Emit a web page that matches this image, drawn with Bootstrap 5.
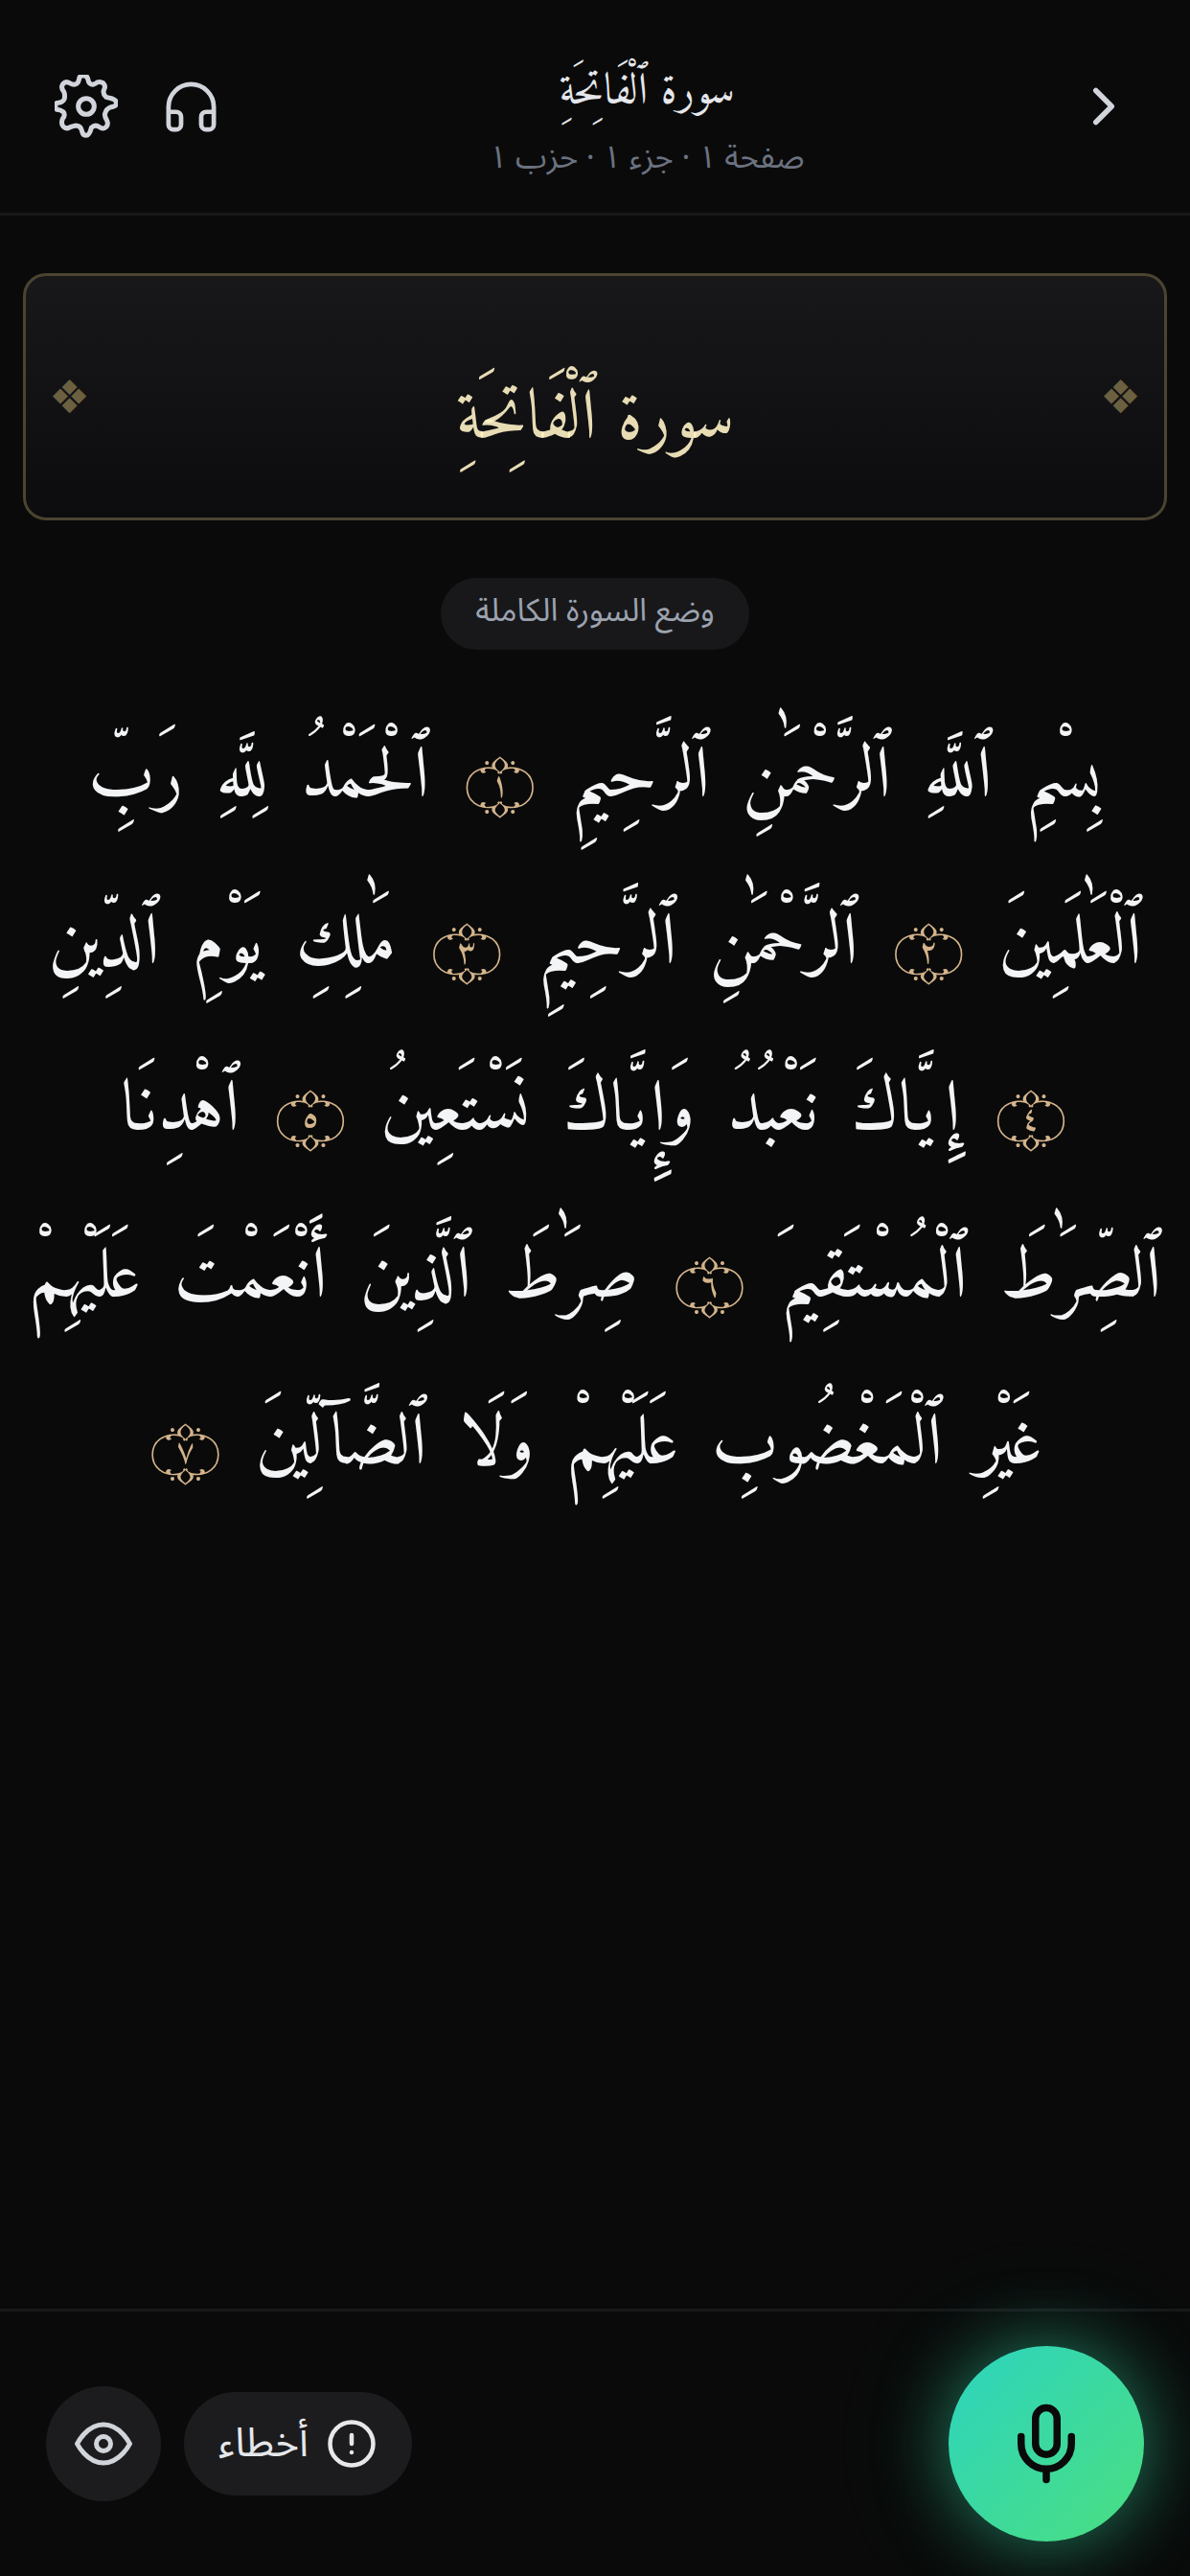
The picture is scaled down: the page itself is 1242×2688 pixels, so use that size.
<!DOCTYPE html>
<html lang="ar" dir="rtl">
<head>
<meta charset="utf-8">
<meta name="viewport" content="width=device-width, initial-scale=1">
<title>سورة الفاتحة</title>
<link href="https://cdn.jsdelivr.net/npm/bootstrap@5.3.0/dist/css/bootstrap.min.css" rel="stylesheet">
<style>
body{background:#0a0a0a;color:#f3f4f6;font-family:"Noto Sans Arabic","Noto Sans",sans-serif}
.quran-font{font-family:"Amiri Quran",Amiri,"Noto Naskh Arabic",serif}
.top-bar{border-bottom:3px solid #18181a;padding:54px 36px 30px}
.bar-btn{color:#d1d5db;padding:24px 21px;border:0;background:none;line-height:0}
.bar-tools{gap:3px}
.page-title{font-size:46px;line-height:54px;color:#e5e7eb;font-weight:400}
.page-meta{margin-top:30px;font-size:33px;line-height:54px;color:#6b7280}
.sura-banner{margin:60px 24px 0;padding:36px 24px;border:3px solid #4a4431;border-radius:24px;background:linear-gradient(180deg,#18181b,#0c0c0e)}
.sura-name{font-size:73px;line-height:180px;color:rgba(255,243,198,.9);font-weight:400}
.floret{font-family:"DejaVu Sans",sans-serif;font-size:48px;line-height:54px;color:#6b6040}
.mode-chip{margin-top:60px;background:#18181b;color:#9ca3af;font-size:33px;line-height:51px;padding:9px 36px 15px}
.ayat{margin-top:22px;font-size:75px;line-height:174px}
.ayat span{padding:0 6px}
.ayat .ayah-no{padding:0 8px;font-size:59px;color:#d4b48c;line-height:1}
.bottom-bar{border-top:3px solid #18181a;padding:36px 48px}
.tool-btn{background:#1c1c1e;color:#e5e7eb;border:0}
.tool-round{width:120px;height:120px;color:#d1d5db}
.tool-pill{height:108px;padding:0 36px;gap:18px;font-size:42px;line-height:60px}
.mic-btn{width:204px;height:204px;border:0;color:#0a0a0a;background:linear-gradient(135deg,#2dd4bf,#4ade80);box-shadow:0 0 72px rgba(52,211,153,.5),0 0 132px rgba(45,212,191,.15)}
svg{fill:none;stroke:currentColor;stroke-width:2;stroke-linecap:round;stroke-linejoin:round;display:block}
.thin-icon{stroke-width:1.8}
.gear-icon{stroke-width:15}
</style>
</head>
<body>
<div class="d-flex flex-column min-vh-100">
  <header class="top-bar d-flex align-items-start">
    <button class="bar-btn" type="button" aria-label="رجوع"><svg width="66" height="66" viewBox="0 0 24 24"><path d="M9 18l6-6-6-6"/></svg></button>
    <div class="flex-grow-1 text-center">
      <h1 class="page-title quran-font mb-0">سورة ٱلْفَاتِحَةِ</h1>
      <div class="page-meta">صفحة ١ · جزء ١ · حزب ١</div>
    </div>
    <div class="bar-tools d-flex">
      <button class="bar-btn" type="button" aria-label="استماع"><svg class="thin-icon" width="63" height="63" viewBox="0 0 24 24"><path d="M3 14h3a2 2 0 0 1 2 2v3a2 2 0 0 1-2 2H5a2 2 0 0 1-2-2v-7a9 9 0 0 1 18 0v7a2 2 0 0 1-2 2h-1a2 2 0 0 1-2-2v-3a2 2 0 0 1 2-2h3"/></svg></button>
      <button class="bar-btn" type="button" aria-label="الإعدادات"><svg class="gear-icon" width="66" height="66" viewBox="51 54 198 198"><circle cx="150" cy="153" r="25"/><path d="M127 70Q128 56 141 56Q154 56 156 70C158 84 170 88 178 82Q190 72 203 80Q212 90 206 100Q200 112 212 124Q222 126 232 129Q246 134 244 146Q242 153 228 155Q212 160 208 178Q208 186 214 196Q221 208 212 218Q202 226 192 218Q178 208 166 220Q160 244 150 244Q140 244 137 232Q134 214 118 213Q110 214 100 218Q88 226 78 216Q70 206 76 192Q86 180 78 170Q70 164 58 163Q52 158 54 150Q54 142 62 142Q78 140 82 128Q84 110 78 104Q70 94 77 83Q86 72 98 80Q112 88 120 82Q126 78 127 70z"/></svg></button>
    </div>
  </header>

  <main class="flex-grow-1">
    <section class="sura-banner d-flex align-items-center justify-content-between">
      <span class="floret" aria-hidden="true">❖</span>
      <h2 class="sura-name quran-font mb-0">سورة ٱلْفَاتِحَةِ</h2>
      <span class="floret" aria-hidden="true">❖</span>
    </section>
    <div class="text-center"><div class="mode-chip d-inline-block rounded-pill">وضع السورة الكاملة</div></div>
    <section class="ayat quran-font text-center">
      <div><span>بِسْمِ</span> <span>ٱللَّهِ</span> <span>ٱلرَّحْمَٰنِ</span> <span>ٱلرَّحِيمِ</span> <span class="ayah-no">۝١</span> <span>ٱلْحَمْدُ</span> <span>لِلَّهِ</span> <span>رَبِّ</span></div>
      <div><span>ٱلْعَٰلَمِينَ</span> <span class="ayah-no">۝٢</span> <span>ٱلرَّحْمَٰنِ</span> <span>ٱلرَّحِيمِ</span> <span class="ayah-no">۝٣</span> <span>مَٰلِكِ</span> <span>يَوْمِ</span> <span>ٱلدِّينِ</span></div>
      <div><span class="ayah-no">۝٤</span> <span>إِيَّاكَ</span> <span>نَعْبُدُ</span> <span>وَإِيَّاكَ</span> <span>نَسْتَعِينُ</span> <span class="ayah-no">۝٥</span> <span>ٱهْدِنَا</span></div>
      <div><span>ٱلصِّرَٰطَ</span> <span>ٱلْمُسْتَقِيمَ</span> <span class="ayah-no">۝٦</span> <span>صِرَٰطَ</span> <span>ٱلَّذِينَ</span> <span>أَنْعَمْتَ</span> <span>عَلَيْهِمْ</span></div>
      <div><span>غَيْرِ</span> <span>ٱلْمَغْضُوبِ</span> <span>عَلَيْهِمْ</span> <span>وَلَا</span> <span>ٱلضَّآلِّينَ</span> <span class="ayah-no">۝٧</span></div>
    </section>
  </main>

  <footer class="bottom-bar d-flex align-items-center justify-content-between">
    <button class="mic-btn rounded-circle d-flex align-items-center justify-content-center" type="button" aria-label="تسجيل"><svg width="90" height="90" viewBox="0 0 24 24"><rect x="9" y="2" width="6" height="13" rx="3"/><path d="M19 10v2a7 7 0 0 1-14 0v-2M12 19v3"/></svg></button>
    <div class="d-flex align-items-center gap-4">
      <button class="tool-btn tool-pill rounded-pill d-flex align-items-center" type="button"><svg width="54" height="54" viewBox="0 0 24 24"><circle cx="12" cy="12" r="10"/><path d="M12 8v4M12 16v.01"/></svg>أخطاء</button>
      <button class="tool-btn tool-round rounded-circle d-flex align-items-center justify-content-center" type="button" aria-label="إظهار"><svg width="60" height="60" viewBox="0 0 24 24"><path d="M1 12s4-8 11-8 11 8 11 8-4 8-11 8-11-8-11-8z"/><circle cx="12" cy="12" r="3"/></svg></button>
    </div>
  </footer>
</div>
<script src="https://cdn.jsdelivr.net/npm/bootstrap@5.3.0/dist/js/bootstrap.bundle.min.js"></script>
</body>
</html>
